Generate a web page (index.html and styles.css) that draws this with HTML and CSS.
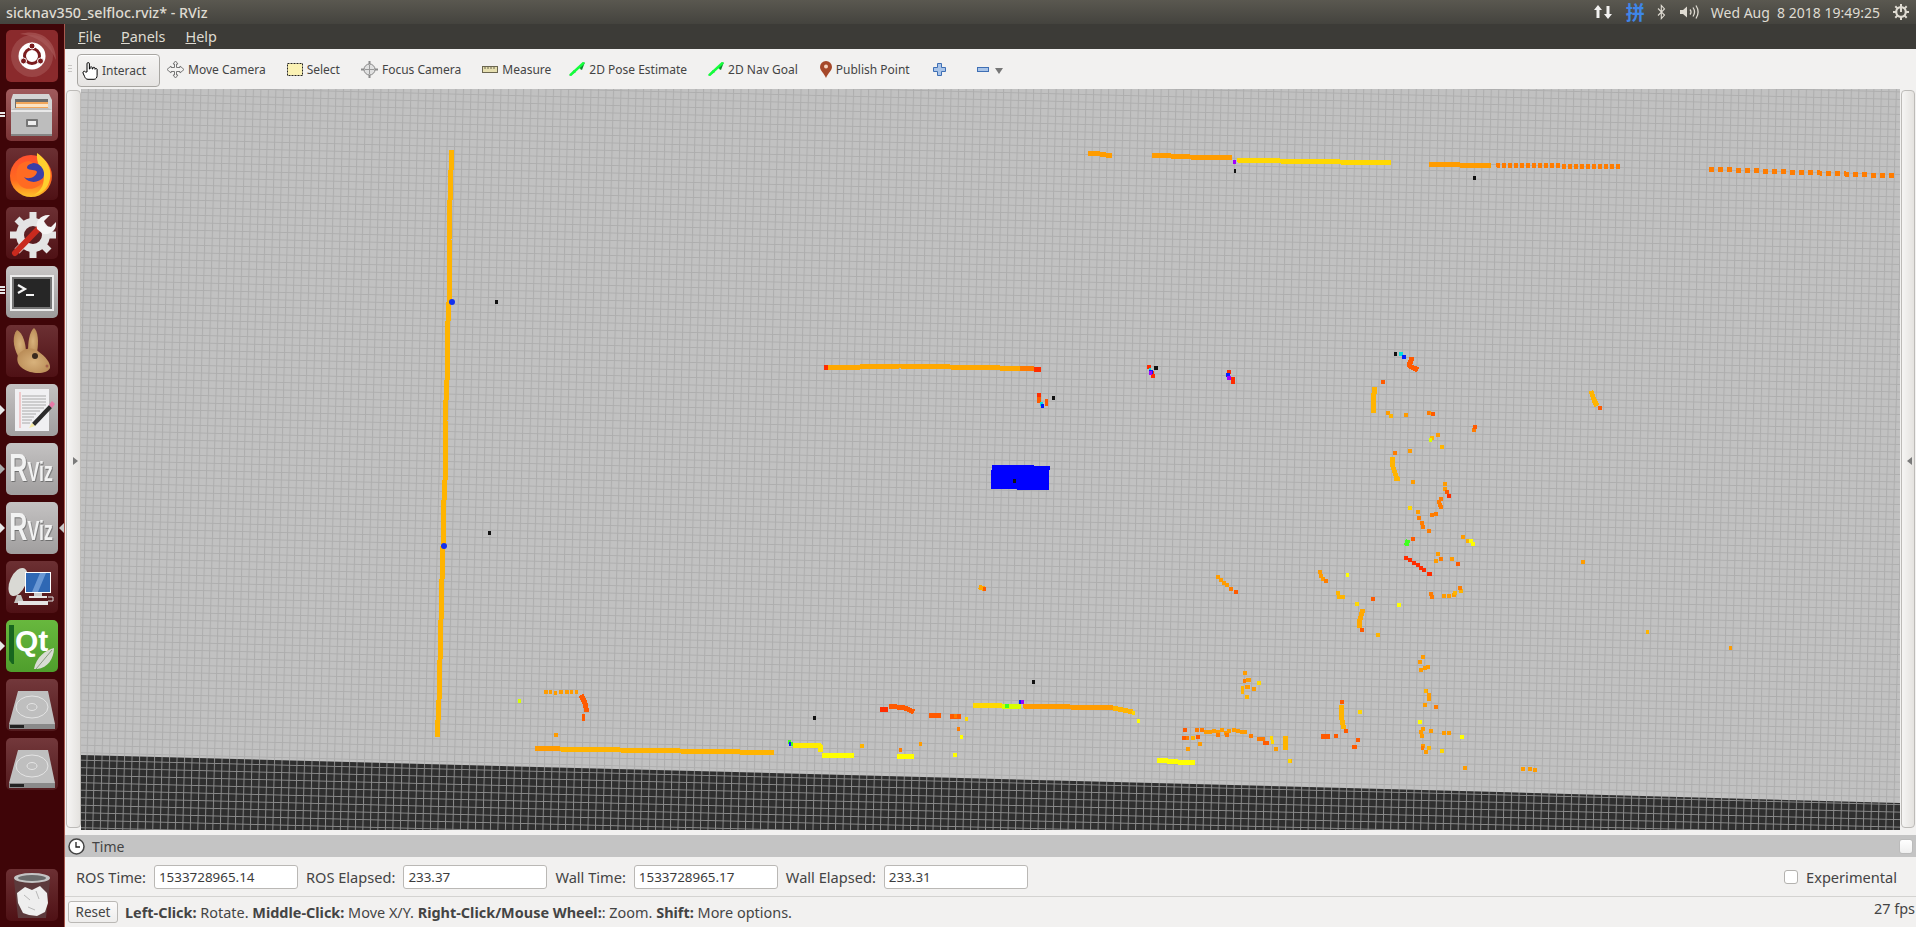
FILE: index.html
```html
<!DOCTYPE html>
<html lang="en">
<head>
<meta charset="UTF-8" />
<title>sicknav350_selfloc.rviz* - RViz</title>
<link rel="stylesheet" href="styles.css">
</head>
<body>
  <header class="top-panel">
    <div class="win-title">sicknav350_selfloc.rviz* - RViz</div>
    <div class="tray">
      <svg class="tray-net" width="18" height="18" viewBox="0 0 18 18"><path d="M4 2 8 7H5.500v8h-3V7H0zM14 16l-4-5h2.500V3h3v8H18z" fill="#f2f1f0"/></svg>
      <span class="tray-ime">拼</span>
      <svg class="tray-bt" width="9" height="16" viewBox="0 0 9 16"><path d="M1 4.500 7.500 11 4.300 14.500V1.500L7.500 5 1 11.500" fill="none" stroke="#dfdbd2" stroke-width="1.100"/></svg>
      <svg class="tray-vol" width="20" height="16" viewBox="0 0 20 16"><path d="M0 6h3l4-3.500v11L3 10H0z" fill="#dfdbd2"/><path d="M10 5.500a4 4 0 0 1 0 5M13 3.500a8 8 0 0 1 0 9M16 1.500a12 12 0 0 1 0 13" fill="none" stroke="#dfdbd2" stroke-width="1.300"/></svg>
      <span class="clock">Wed Aug&nbsp; 8 2018 19:49:25</span>
      <svg class="tray-gear" width="16" height="16" viewBox="0 0 16 16"><g fill="none" stroke="#dfdbd2"><circle cx="8" cy="8" r="4.800" stroke-width="2.200"/><path d="M8 0v3M8 13v3M0 8h3M13 8h3M2.300 2.300l2.100 2.100M11.600 11.600l2.100 2.100M2.300 13.700l2.100-2.100M11.600 4.400l2.100-2.100" stroke-width="2"/></g><rect x="7" y="3" width="2" height="5" fill="#dfdbd2"/></svg>
    </div>
  </header>

  <div class="desktop">
    <nav class="launcher">
      <div class="tile tile-ubuntu">
        <svg viewBox="0 0 52 52"><path d="M14 4c20-6 36 6 36 26-6-14-18-24-36-26z" fill="#a04a4a"/><circle cx="26" cy="26" r="21" fill="#a85a5a" opacity=".55"/><circle cx="26" cy="26" r="13.500" fill="#fff"/><circle cx="26" cy="26" r="7.500" fill="none" stroke="#7a1c1e" stroke-width="3"/><circle cx="26" cy="16" r="3" fill="#7a1c1e" stroke="#fff"/><circle cx="17.500" cy="31" r="3" fill="#7a1c1e" stroke="#fff"/><circle cx="34.500" cy="31" r="3" fill="#7a1c1e" stroke="#fff"/></svg>
      </div>
      <div class="tile tile-files pip-double">
        <svg viewBox="0 0 52 52"><path d="M7 5h36l3 6v12H5V11z" fill="#d4d4d4"/><rect x="9" y="10" width="33" height="10" fill="#6d6d6d"/><rect x="10" y="13" width="32" height="7" fill="#f2a65a"/><rect x="10" y="15" width="32" height="3" fill="#fbe3c4"/><path d="M5 21 9 19h33l4 2v26H5z" fill="#bdbdbd"/><rect x="5" y="21" width="41" height="2" fill="#e8e8e8"/><rect x="5" y="45" width="41" height="2" fill="#858585"/><rect x="20" y="30" width="12" height="8" rx="1" fill="#767676"/><rect x="22" y="32" width="8" height="4" fill="#eee"/></svg>
      </div>
      <div class="tile tile-dark">
        <svg viewBox="0 0 52 52"><defs><linearGradient id="fxa" x1="0" y1="0" x2="0" y2="1"><stop offset="0" stop-color="#ff4f2e"/><stop offset=".6" stop-color="#ff6a1f"/><stop offset="1" stop-color="#ffc22a"/></linearGradient></defs><circle cx="25" cy="28" r="21" fill="url(#fxa)"/><path d="M31 5c12 8 17 20 11 32-3 6-9 9-14 10 8-5 11-12 9-20-2-7-7-12-6-22z" fill="#ffcf2e"/><circle cx="27" cy="26" r="11" fill="#3a3fa8"/><path d="M13 17c5-4 11-5 14-2-3 1-6 2-6 5 2 3 9 1 10 4-1 5-8 8-13 5 5 7 15 6 20 0-1 9-11 14-20 11C10 37 8 25 13 17z" fill="#ff6b22"/></svg>
      </div>
      <div class="tile tile-dark">
        <svg viewBox="0 0 52 52"><circle cx="27" cy="28" r="13" fill="none" stroke="#e4e4e4" stroke-width="8"/><path d="M27 5v7M27 44v7M4 28h7M43 28h7M11 12l5 5M38 39l5 5M11 44l5-5" stroke="#e4e4e4" stroke-width="7"/><path d="M9 46 36 18" stroke="#c92a1e" stroke-width="6" stroke-linecap="round"/><path d="M31 22c-2-8 4-15 13-14l-6 6 2 5 5 1 5-5c1 8-5 13-13 12z" fill="#f4f4f4"/></svg>
      </div>
      <div class="tile tile-grey pip-triple">
        <svg viewBox="0 0 52 52"><rect x="4" y="9" width="44" height="36" fill="#ececec"/><rect x="6" y="11" width="40" height="32" fill="#757575"/><rect x="8" y="13" width="36" height="28" fill="#262626"/><path d="M12 19l7 4-7 4" fill="none" stroke="#f4f4f4" stroke-width="2.200"/><rect x="20" y="28" width="8" height="2" fill="#f4f4f4"/></svg>
      </div>
      <div class="tile tile-dark">
        <svg viewBox="0 0 52 52"><defs><radialGradient id="rab" cx=".5" cy=".55" r=".6"><stop offset="0" stop-color="#d8b27c"/><stop offset="1" stop-color="#b88a55"/></radialGradient></defs><path d="M11 5c6 3 9 14 9 23l-8 3C7 22 6 10 11 5z" fill="url(#rab)"/><path d="M28 3c4 3 5 14 3 24h-9c0-9 1-20 6-24z" fill="url(#rab)"/><path d="M12 30c6-8 16-8 21-3 6 4 12 11 11 16-1 3-6 5-12 5-10 0-24-6-20-18z" fill="url(#rab)"/><circle cx="29" cy="31" r="3" fill="#3a2a1e"/><circle cx="41" cy="41" r="1.500" fill="#a5604a"/></svg>
      </div>
      <div class="tile tile-grey2 pip-arrow">
        <svg viewBox="0 0 52 52"><rect x="9" y="5" width="34" height="42" fill="#f0f0f2"/><path d="M14 8v36" stroke="#eea0a0"/><path d="M16 12h24M16 15h24M16 18h24M16 21h24M16 24h22M16 27h18M16 30h14M16 33h12M16 36h10M16 39h8" stroke="#aaa"/><path d="M26 39 43 21l3 3-17 18z" fill="#2b2b2b"/><path d="M43 21l3-4 3 3-3 4z" fill="#e878a8"/><path d="M26 39l3 3-6 2z" fill="#f4e9a0"/></svg>
      </div>
      <div class="tile tile-grey2 pip-hollow">
        <svg viewBox="0 0 52 52"><text class="rviz-logo" transform="scale(.66 1)" x="5" y="38">R<tspan class="rviz-small">Viz</tspan></text></svg>
      </div>
      <div class="tile tile-grey2 pip-arrow pip-right">
        <svg viewBox="0 0 52 52"><text class="rviz-logo" transform="scale(.66 1)" x="5" y="38">R<tspan class="rviz-small">Viz</tspan></text></svg>
      </div>
      <div class="tile tile-dark">
        <svg viewBox="0 0 52 52"><ellipse cx="12" cy="21" rx="8" ry="15" transform="rotate(24 12 21)" fill="#d9d9d4"/><path d="M11 34l-3 8h10l-3-8z" fill="#c4c4c0"/><rect x="19" y="11" width="26" height="21" fill="#fff"/><rect x="20" y="12" width="24" height="19" fill="#2f68b4"/><path d="M26 31l8-19h6l-8 19z" fill="#6a98d4"/><rect x="28" y="32" width="8" height="3" fill="#ccc"/><rect x="23" y="35" width="18" height="2" fill="#e8e8e8"/><rect x="12" y="40" width="30" height="4" fill="#e4e4e4"/><path d="M42 36h5v4h-5" fill="none" stroke="#ddd"/></svg>
      </div>
      <div class="tile tile-qt pip-arrow">
        <svg viewBox="0 0 52 52"><path d="M3 5h5v39H6L3 40z" fill="#17661f"/><text class="qt-logo" x="9" y="31">Qt</text><path d="M28 49c2-12 12-19 20-21 0 10-6 20-17 21z" fill="#d9dcd4"/><path d="M30 49 46 30" stroke="#8a9a80"/></svg>
      </div>
      <div class="tile tile-disk">
        <svg viewBox="0 0 52 52"><path d="M12 12h30l7 33H3z" fill="#bfbfbf"/><path d="M3 45h46v5H3z" fill="#8a8a8a"/><rect x="4" y="46" width="14" height="3" fill="#222"/><ellipse cx="26" cy="28" rx="16" ry="11" fill="none" stroke="#e4e4e4"/><ellipse cx="26" cy="28" rx="5" ry="3.500" fill="none" stroke="#e4e4e4"/></svg>
      </div>
      <div class="tile tile-disk">
        <svg viewBox="0 0 52 52"><path d="M12 12h30l7 33H3z" fill="#bfbfbf"/><path d="M3 45h46v5H3z" fill="#8a8a8a"/><rect x="4" y="46" width="14" height="3" fill="#222"/><ellipse cx="26" cy="28" rx="16" ry="11" fill="none" stroke="#e4e4e4"/><ellipse cx="26" cy="28" rx="5" ry="3.500" fill="none" stroke="#e4e4e4"/></svg>
      </div>
      <div class="tile tile-dark tile-trash">
        <svg viewBox="0 0 52 52"><path d="M8 11h36l-4 38H12z" fill="#5c3a3c"/><ellipse cx="26" cy="9" rx="18" ry="5" fill="#c4c4c4"/><ellipse cx="26" cy="9" rx="14" ry="3" fill="#6a6a6a"/><path d="M11 24l8-6 7 3 8-4 7 7 1 10-3 9-8 4-8-1-6-2-5-10z" fill="#eeeeee"/><path d="M18 26l6 5M30 22l3 8M22 38l7 3" stroke="#b8b8b8"/></svg>
      </div>
    </nav>

    <div class="app">
      <div class="menubar">
        <span><u>F</u>ile</span>
        <span><u>P</u>anels</span>
        <span><u>H</u>elp</span>
      </div>

      <div class="toolbar">
        <div class="grip"></div>
        <div class="tool tool-active">
          <svg width="17" height="18" viewBox="0 0 17 18"><path d="M5 10V1.800a1.200 1.200 0 0 1 2.400 0V7h.6V5.500a1.200 1.200 0 0 1 2.200 0V7h.6V6a1.200 1.200 0 0 1 2.200 0v1.300a1.100 1.100 0 0 1 2.100 0v6c0 2-1 4-3 4H6c-2 0-3-1.500-3.500-3L1 11c-.5-1.500 1.500-2.500 2.500-1z" fill="#fff" stroke="#000"/></svg>
          <span>Interact</span>
        </div>
        <div class="tool">
          <svg width="17" height="17" viewBox="0 0 17 17"><path d="M8.500 0 11 3H9.500v3.500H13V5l4 3.500L13 12v-1.500H9.500V14H11l-2.500 3L6 14h1.500v-3.500H4V12L0 8.500 4 5v1.500h3.500V3H6z" fill="#f2f1f0" stroke="#777"/></svg>
          <span>Move Camera</span>
        </div>
        <div class="tool">
          <svg width="16" height="13" viewBox="0 0 16 13"><rect x=".5" y=".5" width="15" height="12" fill="#fbf2b4" stroke="#222" stroke-dasharray="2 1"/></svg>
          <span>Select</span>
        </div>
        <div class="tool">
          <svg width="17" height="17" viewBox="0 0 17 17"><path d="M8.500 0v17M0 8.500h17" stroke="#8a8a8a" stroke-width="2"/><circle cx="8.500" cy="8.500" r="5.500" fill="#e0e0e0" stroke="#888"/><path d="M8.500 4v9M4 8.500h9" stroke="#999"/></svg>
          <span>Focus Camera</span>
        </div>
        <div class="tool">
          <svg width="16" height="7" viewBox="0 0 16 7"><rect x=".5" y=".5" width="15" height="6" fill="#e6dfb0" stroke="#6b6650"/><path d="M3 1v2M6 1v2M9 1v2M12 1v2" stroke="#6b6650"/></svg>
          <span>Measure</span>
        </div>
        <div class="tool tool-pose">
          <svg width="16" height="14" viewBox="0 0 16 14"><path d="M0 14 5 8 7 10zM9 6l7-6-3 8-2-1 .6-.6z" fill="#0a8c2a"/><path d="M1 13.500 15 .5" stroke="#14ff3c" stroke-width="2.500"/></svg>
          <span>2D Pose Estimate</span>
        </div>
        <div class="tool">
          <svg width="16" height="14" viewBox="0 0 16 14"><path d="M0 14 5 8 7 10zM9 6l7-6-3 8-2-1 .6-.6z" fill="#0a8c2a"/><path d="M1 13.500 15 .5" stroke="#14ff3c" stroke-width="2.500"/></svg>
          <span>2D Nav Goal</span>
        </div>
        <div class="tool tool-pin">
          <svg width="12" height="17" viewBox="0 0 12 17"><path d="M6 17C4 12 0 9.500 0 6a6 6 0 0 1 12 0c0 3.500-4 6-6 11z" fill="#a5482a"/><circle cx="6" cy="5.500" r="2" fill="#f4d4c0"/></svg>
          <span>Publish Point</span>
        </div>
        <svg class="tb-plus" width="13" height="13" viewBox="0 0 13 13"><path d="M4.500.5h4v4h4v4h-4v4h-4v-4h-4v-4h4z" fill="#a9c4e8" stroke="#3f6fb4"/></svg>
        <svg class="tb-minus" width="12" height="5" viewBox="0 0 12 5"><rect x=".5" y=".5" width="11" height="4" fill="#a9c4e8" stroke="#3f6fb4"/></svg>
        <svg class="tb-more" width="8" height="6" viewBox="0 0 8 6"><path d="M0 0h8L4 6z" fill="#777"/></svg>
      </div>

      <div class="view-row">
        <div class="splitter"><i class="arrow-r"></i></div>
        <svg class="scene" width="1819" height="741" viewBox="81 89 1819 741">
          <defs>
            <pattern id="grid-light" width="7.500" height="7.500" patternUnits="userSpaceOnUse" patternTransform="rotate(1.400)">
              <rect width="7.500" height="7.500" fill="#c1c1c1"/>
              <path d="M0 .5h7.500M.5 0v7.500" stroke="#aeaeae" stroke-width="1"/>
            </pattern>
            <pattern id="grid-dark" width="7.500" height="7.500" patternUnits="userSpaceOnUse" patternTransform="rotate(1.400)">
              <rect width="7.500" height="7.500" fill="#2f2f2f"/>
              <path d="M0 .5h7.500M.5 0v7.500" stroke="#8a8a8a" stroke-width="1"/>
            </pattern>
          </defs>
          <rect x="81" y="89" width="1819" height="741" fill="url(#grid-light)"/>
          <path d="M81 755 1500 792 1900 803V830H81z" fill="url(#grid-dark)"/>

          <!-- laser scan lines -->
          <path class="ln gold" d="M452 150 451 170 450 200 449 240 450 262 449 302 447 340 447 380 445 420 446 460 444 500 443 546 442 580 441 620 440 660 439 700 438 720 437 737"/>
          <path class="ln orange" d="M1088 153 1100 154 1112 156M1152 155 1190 157 1232 158M535 748 560 749"/>
          <path class="ln gold2" d="M824 367 860 367 900 366 950 367 1000 368 1020 368M979 587 985 589"/>
          <path class="ln deep" d="M1020 368 1034 369"/>
          <path class="ln red" d="M1034 369 1041 369M824 367 828 367"/>
          <path class="ln yellow" d="M1237 160 1280 161 1340 162 1391 163"/>
          <path class="ln orange" d="M1429 164 1460 165 1491 166"/>
          <path class="ln deep dash" d="M1496 165 1560 166 1621 167"/>
          <path class="ln deep dash2" d="M1709 169 1760 171 1820 173 1896 176"/>
          <path class="ln gold" d="M560 749 620 750 680 751 740 752 774 752"/>
          <path class="ln lemon" d="M793 745 820 745 820 752"/>
          <path class="ln pure" d="M822 755 854 755M897 756 914 756M1157 760 1178 762 1195 763"/>
          <path class="ln red" d="M880 710 888 709"/>
          <path class="ln rust" d="M889 706 897 707 905 708 914 712M929 715 941 715M950 716 961 716"/>
          <path class="ln yellow" d="M973 705 1002 706"/>
          <path class="ln lime" d="M1002 706 1021 706"/>
          <path class="ln orange" d="M1023 706 1070 707 1113 708"/>
          <path class="ln gold" d="M1113 708 1133 712"/>
          <path class="ln gold" d="M1375 387 1373 400 1374 413M1392 457 1393 467 1396 476 1397 481M1591 391 1594 400 1597 406M1285 736 1285 750M1341 705 1341 715 1343 725 1344 729"/>
          <path class="ln gold2" d="M1363 609 1361 616 1359 623 1360 628"/>
          <path class="ln rust" d="M1412 357 1411 361 1409 365 1411 367 1414 368 1418 370M581 695 583 699 585 703 586 708 586 712M1321 736 1330 736"/>
          <path class="ln green" d="M1408 540 1406 546"/>

          <!-- single returns -->
          <path class="dot orange" d="M1216 577h4M1219 580h4M1222 583h4M1225 585h4M1318 572h4M1319 576h4M1321 579h4M1408 451h4M1411 482h4M1416 512h4M1436 435h4M1443 484h4M1443 489h4M1404 415h4M1386 413h4M1427 413h4M1436 554h4M1434 561h4M1450 559h4M1461 537h4M1581 562h4M1442 596h4M1447 596h4M1452 595h4M1429 731h4M1421 729h4M1419 732h4M1420 736h4M1442 733h4M1447 733h4M1424 691h4M1427 695h4M1427 699h4M1423 705h4M1421 657h4M1418 662h4M1423 668h4M1419 670h4M1426 667h4M1424 752h4M1421 746h4M1243 673h4M1246 680h5M1245 687h5M1252 689h4M1204 732h4M1208 732h4M1212 731h4M1216 732h4M1220 730h4M1224 733h4M1227 731h4M1232 730h4M1236 731h4M1240 732h4M1243 732h4M1198 744h4M1274 749h4M1186 749h4M1521 769h4M1528 769h4M1533 770h4M1463 768h4M1729 648h3M919 744h3M544 692h4M549 692h3M554 693h3M559 692h4M565 692h4M570 692h3M575 692h3M554 735h4"/>
          <path class="dot gold" d="M1389 416h4M1397 479h3M1430 438h4M1440 447h4M1466 541h4M1459 591h4M1453 593h4M1341 597h4M1336 593h4M1337 597h4M1241 688h3M1241 692h3M1245 697h4M1191 738h4M1427 748h4M1646 632h3M860 746h4M1376 635h4M1288 761h4M1424 691h3"/>
          <path class="dot deep" d="M1393 453h4M1427 413h3M1439 499h4M1437 502h4M1438 505h4M1439 507h4M1417 518h4M1420 523h4M1421 527h4M1427 531h4M1430 515h4M1434 514h4M1439 559h4M1421 748h3M1429 594h4M1430 597h4M1458 588h4M1324 581h4M1229 589h4M1243 681h3M1257 739h5M1262 739h3M1249 736h4M1216 735h4M1225 735h4M1200 730h4M1195 730h4M1185 738h4M957 729h3M899 750h3M1434 707h4M1472 430h4M954 716h3"/>
          <path class="dot rust" d="M1381 382h4M1431 414h4M1473 427h4M1445 492h4M1456 564h4M1234 592h4M1183 730h4M1182 738h4M1196 737h4M1263 743h6M1334 736h4M1352 747h5M1356 740h4M1340 702h4M1344 731h4M1360 630h4M1371 599h4M582 716h3M582 719h3M1411 539h4M1598 408h4M1037 398h4M1037 401h4M1045 401h3M1045 404h3M983 589h3"/>
          <path class="dot red" d="M1404 558h4M1408 560h4M1412 563h4M1416 565h4M1419 568h4M1422 570h4M1427 574h5M1447 496h4M1037 395h4M1147 367h4M1150 373h4M1151 376h4M1227 372h4M1231 379h4M1231 382h4"/>
          <path class="dot yellow" d="M1270 738h3M1271 742h3M1257 683h4M1358 712h4M1408 508h4M1355 604h4M1288 761h3M965 719h3M1440 751h4M1132 713h3"/>
          <path class="dot pure" d="M1469 541h4M1471 544h4M1397 605h4M1346 575h3M1460 737h4M1418 722h4M953 755h4M960 737h3M1137 721h3"/>
          <path class="dot lime" d="M1429 440h3M518 701h3"/>
          <path class="dot green" d="M1005 706h4M788 742h3M791 744h2"/>
          <path class="dot cyan" d="M1399 354h4M1149 370h2M1040 404h3"/>
          <path class="dot blue" d="M1402 357h4M1041 406h3M1149 372h4M789 744h2M1019 702h2M1226 375h4"/>
          <path class="dot violet" d="M1233 162h3M1021 702h3M1227 378h4M1149 373h3"/>
          <path class="dot black" d="M495 302h3M488 533h3M1234 171h2M1473 178h3M1394 354h3M1052 398h3M1154 368h4M813 718h3M1032 682h3"/>
          <circle class="marker" cx="452" cy="302" r="3"/>
          <circle class="marker" cx="444" cy="546" r="3"/>

          <!-- robot footprint -->
          <path class="robot" d="M992 465H1034V466H1050V470H1049V490H1017V489H991V470H992z"/>
          <path class="dot black" d="M1013 481h3"/>
        </svg>
        <div class="splitter"><i class="arrow-l"></i></div>
      </div>

      <div class="time-head">
        <svg width="17" height="17" viewBox="0 0 17 17"><circle cx="8.500" cy="8.500" r="7.500" fill="#fff" stroke="#444" stroke-width="1.500"/><path d="M8 4v5h4" fill="none" stroke="#222" stroke-width="1.300"/></svg>
        <span>Time</span>
        <div class="float-btn"></div>
      </div>

      <div class="time-row">
        <label>ROS Time:</label>
        <div class="field">1533728965.14</div>
        <label>ROS Elapsed:</label>
        <div class="field">233.37</div>
        <label>Wall Time:</label>
        <div class="field">1533728965.17</div>
        <label>Wall Elapsed:</label>
        <div class="field">233.31</div>
        <div class="experimental"><i class="check"></i><span>Experimental</span></div>
      </div>

      <div class="statusbar">
        <button class="reset">Reset</button>
        <div class="hint"><b>Left-Click:</b> Rotate. <b>Middle-Click:</b> Move X/Y. <b>Right-Click/Mouse Wheel:</b>: Zoom. <b>Shift:</b> More options.</div>
        <div class="fps">27 fps</div>
      </div>
    </div>
  </div>
</body>
</html>
```

FILE: styles.css
```css
* {
  box-sizing: border-box;
}
html, body {
  height: 100%;
}
body {
  margin: 0;
  display: flex;
  flex-direction: column;
  overflow: hidden;
  font-family: 'Noto Sans', 'Open Sans', sans-serif;
  font-size: 12px;
  color: #444;
  background: #f2f1f0;
}

/* top panel */
.top-panel {
  height: 24px;
  flex: none;
  display: flex;
  align-items: center;
  justify-content: space-between;
  padding: 0 7px 0 6px;
  background: linear-gradient(#5a5850, #44433e);
  color: #dfdbd2;
}
.win-title {
  font-size: 14.3px;
  font-weight: 500;
}
.tray {
  display: flex;
  align-items: center;
}
.tray-ime {
  margin-left: 14px;
  font: 700 19px 'Noto Sans CJK SC', sans-serif;
  line-height: 24px;
  color: #3f86e8;
}
.tray-bt {
  margin-left: 12px;
}
.tray-vol {
  margin-left: 14px;
}
.clock {
  margin-left: 11px;
  font-size: 14px;
}
.tray-gear {
  margin-left: 13px;
}

/* launcher */
.desktop {
  flex: 1;
  min-height: 0;
  display: flex;
}
.launcher {
  width: 65px;
  flex: none;
  display: flex;
  flex-direction: column;
  gap: 7px;
  padding: 6px 0 6px 6px;
  background: #3f0508;
  border-right: 1px solid #a85a50;
}
.tile {
  position: relative;
  width: 52px;
  height: 52px;
  border-radius: 5px;
  flex: none;
}
.tile svg {
  display: block;
  width: 52px;
  height: 52px;
}
.tile-ubuntu { background: #8a2a2c; }
.tile-files { background: linear-gradient(#a05a5c, #7a3436); }
.tile-dark { background: linear-gradient(#6c3033, #4f1115); }
.tile-grey { background: linear-gradient(#c8c6c6, #9c9a9a); }
.tile-grey2 { background: linear-gradient(#c4c2c2, #a09e9e); }
.tile-qt { background: linear-gradient(#68b83e, #4f9e2c); }
.tile-disk { background: linear-gradient(#73383b, #531a1d); }
.tile-trash { margin-top: auto; }

.rviz-logo {
  font-family: 'Liberation Sans', sans-serif;
  font-size: 38px;
  font-weight: 700;
  fill: #f2f2f2;
  filter: drop-shadow(1px 1px 0 #6e6e6e);
}
.rviz-small {
  font-size: 27px;
}
.qt-logo {
  font-family: 'Liberation Sans', sans-serif;
  font-size: 30px;
  font-weight: 700;
  fill: #fff;
}
.pip-arrow::before,
.pip-hollow::before {
  content: "";
  position: absolute;
  left: -6px;
  top: 21px;
  border: 5px solid transparent;
  border-left-color: #e8e8e8;
  border-right-width: 0;
}
.pip-hollow::before {
  border-left-color: #aaa;
}
.pip-right::after {
  content: "";
  position: absolute;
  right: -6px;
  top: 21px;
  border: 5px solid transparent;
  border-right-color: #c8c8c8;
  border-left-width: 0;
}
.pip-double::before,
.pip-triple::before {
  content: "";
  position: absolute;
  left: -6px;
  top: 23px;
  width: 5px;
  height: 2px;
  background: #e8e8e8;
  box-shadow: 0 3px 0 #e8e8e8;
}
.pip-triple::before {
  top: 20px;
  box-shadow: 0 3px 0 #e8e8e8, 0 6px 0 #e8e8e8;
}

/* application window */
.app {
  flex: 1;
  min-width: 0;
  display: flex;
  flex-direction: column;
}
.menubar {
  height: 25px;
  flex: none;
  display: flex;
  align-items: center;
  gap: 20px;
  padding-left: 13px;
  background: #3c3b37;
  color: #dfdbd2;
  font-size: 14.4px;
}
.toolbar {
  height: 40px;
  flex: none;
  display: flex;
  align-items: center;
  gap: 21px;
  padding-left: 3px;
  background: #f2f1f0;
  font-size: 12px;
}
.grip {
  width: 4px;
  height: 8px;
  margin: 0 -16px 0 0;
  background: repeating-linear-gradient(#c8c6c4 0 1px, transparent 1px 3px);
}
.tool {
  display: flex;
  align-items: center;
  gap: 4px;
  white-space: nowrap;
}
.tool-active {
  margin: 3px -14px 0 0;
  width: 83px;
  height: 33px;
  gap: 3px;
  padding-left: 4px;
  border: 1px solid #a8a6a2;
  border-radius: 4px;
  background: linear-gradient(#f5f4f3, #e6e4e2);
  box-shadow: inset 0 1px 0 #fff;
}
.tool-pose {
  margin-left: -3px;
}
.tool-pin {
  margin-left: 1px;
}
.tb-plus {
  margin-left: 2px;
}
.tb-minus {
  margin-left: 10px;
}
.tb-more {
  margin: 4px 0 0 -15px;
}

/* 3D view */
.view-row {
  height: 741px;
  flex: none;
  display: flex;
}
.scene {
  display: block;
  flex: none;
}
.splitter {
  position: relative;
  width: 15px;
  margin: 1px 0 2px 1px;
  border: 1px solid #bdbbb8;
  border-radius: 4px;
  background: linear-gradient(90deg, #f6f5f4, #e4e2df);
}
.splitter:last-child {
  margin: 1px 1px 2px 1px;
}
.arrow-r,
.arrow-l {
  position: absolute;
  top: 366px;
  left: 6px;
  border: 4px solid transparent;
  border-left: 5px solid #7a7a7a;
  border-right-width: 0;
}
.arrow-l {
  border-left-width: 0;
  border-right: 5px solid #7a7a7a;
  left: 5px;
}
.scene .ln {
  fill: none;
  stroke-width: 5;
  stroke-linejoin: bevel;
  shape-rendering: crispEdges;
}
.scene .dot {
  fill: none;
  stroke-width: 4;
  shape-rendering: crispEdges;
}
.scene .dash {
  stroke-dasharray: 4 2;
}
.scene .dash2 {
  stroke-dasharray: 5 4;
}
.marker {
  fill: #1230f0;
}
.robot {
  fill: #0000ff;
  shape-rendering: crispEdges;
}
.gold { stroke: #ffb400; }
.gold2 { stroke: #ffa800; }
.orange { stroke: #ff9c00; }
.deep { stroke: #ff7c00; }
.rust { stroke: #ff5a00; }
.red { stroke: #ff2c00; }
.yellow { stroke: #ffd800; }
.lemon { stroke: #ffec00; }
.pure { stroke: #ffff00; }
.lime { stroke: #d8ff00; }
.green { stroke: #40ff20; }
.cyan { stroke: #00e0e0; }
.blue { stroke: #0020ff; }
.violet { stroke: #a000ff; }
.black { stroke: #111; }

/* time panel */
.time-head {
  height: 22px;
  flex: none;
  margin-top: 5px;
  display: flex;
  align-items: center;
  gap: 7px;
  padding: 0 3px;
  background: #c4c4c4;
  font-size: 14px;
}
.float-btn {
  width: 14px;
  height: 15px;
  margin-left: auto;
  border: 1px solid #bbb;
  border-radius: 3px;
  background: linear-gradient(#fff, #efefef);
}
.time-row {
  height: 40px;
  flex: none;
  display: flex;
  align-items: center;
  padding: 0 19px 0 11px;
  border-bottom: 1px solid #d4d3d1;
  font-size: 14.6px;
}
.time-row label {
  white-space: nowrap;
}
.field {
  width: 144px;
  height: 24px;
  margin: 0 8px 0 8px;
  padding-left: 4px;
  border: 1px solid #bab8b5;
  border-radius: 3px;
  background: #fff;
  color: #3c3c3c;
  font-size: 13.4px;
  line-height: 22px;
}
.experimental {
  margin-left: auto;
  display: flex;
  align-items: center;
  gap: 8px;
}
.check {
  width: 14px;
  height: 14px;
  border: 1px solid #b4b2af;
  border-radius: 3px;
  background: #fff;
}

/* status bar */
.statusbar {
  flex: 1;
  display: flex;
  align-items: center;
  padding: 0 1px 0 3px;
  font-size: 14.45px;
}
.reset {
  width: 50px;
  height: 22px;
  padding: 0;
  border: 1px solid #bab8b5;
  border-radius: 3px;
  background: linear-gradient(#fbfafa, #eeedec);
  font: inherit;
  font-size: 13.5px;
  color: inherit;
}
.hint {
  margin-left: 7px;
}
.fps {
  margin: -8px 0 0 auto;
}
```
